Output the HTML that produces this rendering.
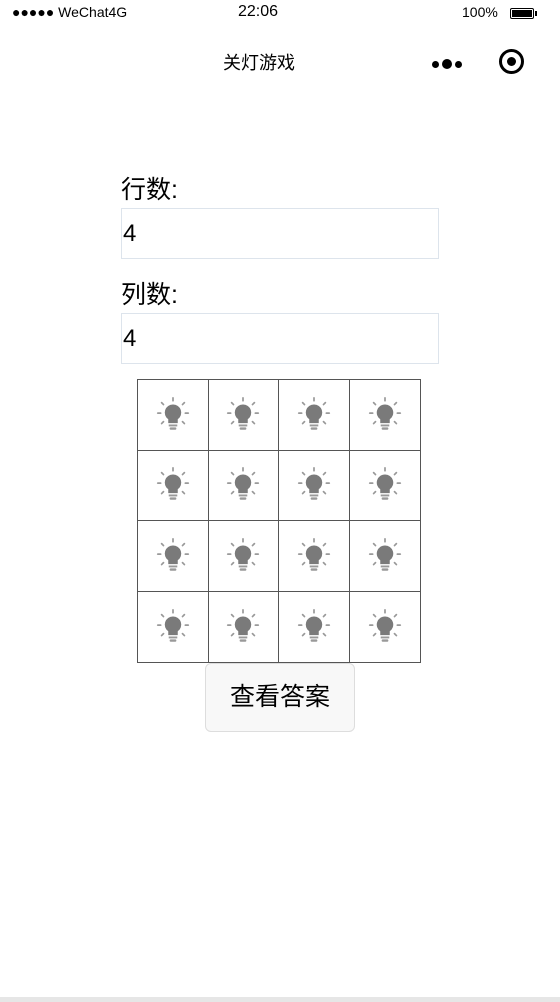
<!DOCTYPE html>
<html><head><meta charset="utf-8"><style>
*{margin:0;padding:0;box-sizing:border-box}
body{width:560px;height:1002px;background:#fff;position:relative;overflow:hidden;font-family:"Liberation Sans","Noto Sans CJK SC",sans-serif;color:#000}
.a{position:absolute}
.inp{position:absolute;left:121px;width:318px;height:51px;border:1px solid #dde4ec;font-size:24px;line-height:49px;padding-left:1px}
.lbl{position:absolute;left:121px;font-size:25px;line-height:30px}
.grid{position:absolute;left:137px;top:379px;width:284px;height:284px;border:1px solid #555;display:grid;grid-template-columns:repeat(4,1fr);grid-template-rows:repeat(4,1fr)}
.grid div{border-right:1px solid #555;border-bottom:1px solid #555;display:flex;align-items:center;justify-content:center}
.grid div:nth-child(4n){border-right:none}
.grid div:nth-child(n+13){border-bottom:none}
</style></head><body>
<div class="a" style="left:12px;top:4px;font-size:14px">●●●●● WeChat4G</div>
<div class="a" style="left:238px;top:3px;font-size:16px">22:06</div>
<div class="a" style="left:462px;top:4px;font-size:14px">100%</div>
<div class="a" style="left:510px;top:8px;width:24px;height:11px;border:1.5px solid #000;border-radius:2px;padding:1px"><div style="background:#000;width:100%;height:100%"></div></div>
<div class="a" style="left:535px;top:11px;width:2px;height:5px;background:#000"></div>
<div class="a" style="left:223px;top:49px;font-size:18px">关灯游戏</div>
<div class="a" style="left:432px;top:61px;width:7px;height:7px;border-radius:50%;background:#000"></div>
<div class="a" style="left:442px;top:59px;width:10px;height:10px;border-radius:50%;background:#000"></div>
<div class="a" style="left:455px;top:61px;width:7px;height:7px;border-radius:50%;background:#000"></div>
<div class="a" style="left:499px;top:49px;width:25px;height:25px;border-radius:50%;border:3px solid #000"></div>
<div class="a" style="left:507px;top:57px;width:9px;height:9px;border-radius:50%;background:#000"></div>
<div class="lbl" style="top:175px">行数:</div>
<div class="inp" style="top:208px">4</div>
<div class="lbl" style="top:280px">列数:</div>
<div class="inp" style="top:313px">4</div>
<div class="grid" id="g"></div>
<div class="a" style="left:205px;top:663px;width:150px;height:69px;background:#f8f8f8;border:1px solid #ddd;border-radius:6px;font-size:25px;line-height:67px;text-align:center">查看答案</div>
<div class="a" style="left:0;top:997px;width:560px;height:5px;background:#e6e6e6"></div>
<script>
var s='<div><svg width="38" height="38" viewBox="0 0 40 40"><g stroke="#999" stroke-width="1.8" stroke-linecap="round"><line x1="20" y1="2" x2="20" y2="5"/><line x1="8" y1="7" x2="10" y2="9"/><line x1="32" y1="7" x2="30" y2="9"/><line x1="4" y1="18" x2="7" y2="18"/><line x1="33" y1="18" x2="36" y2="18"/><line x1="8" y1="29" x2="10" y2="27"/><line x1="32" y1="29" x2="30" y2="27"/></g><path d="M20 9a8.5 8.5 0 0 0-5 15.5v4h10v-4A8.5 8.5 0 0 0 20 9z" fill="#7a7a7a"/><rect x="15.5" y="30" width="9" height="2" fill="#999"/><rect x="16.5" y="33" width="7" height="2.5" rx="1" fill="#999"/></svg></div>';
document.getElementById('g').innerHTML=s.repeat(16);
</script>
</body></html>
